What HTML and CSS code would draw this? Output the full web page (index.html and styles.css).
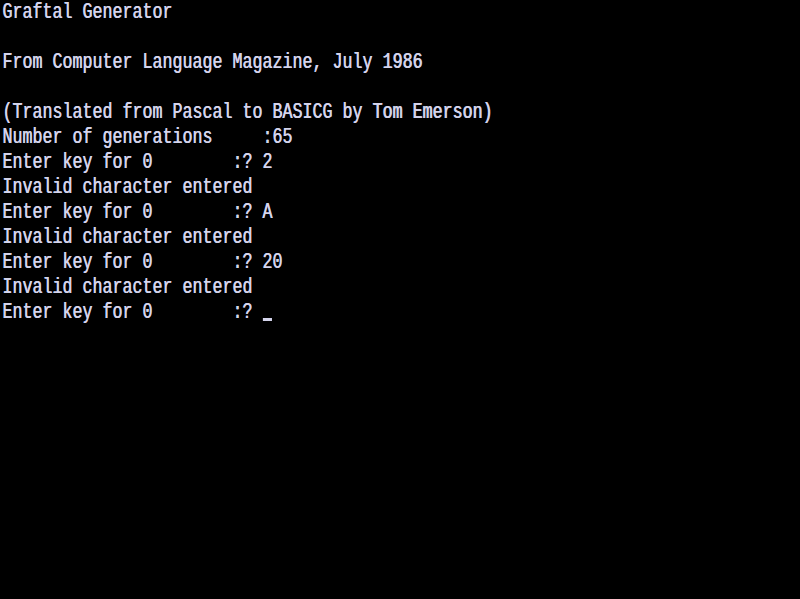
FILE: index.html
```html
<!DOCTYPE html>
<html>
<head>
<meta charset="utf-8">
<link rel="stylesheet" href="styles.css">
<title>Graftal Generator</title>
</head>
<body>
<pre class="screen">Graftal Generator

From Computer Language Magazine, July 1986

(Translated from Pascal to BASICG by Tom Emerson)
Number of generations     :65
Enter key for 0        :? 2
Invalid character entered
Enter key for 0        :? A
Invalid character entered
Enter key for 0        :? 20
Invalid character entered
Enter key for 0        :? <span class="cursor"></span></pre>
</body>
</html>
```
FILE: styles.css
```css
html, body {
  margin: 0;
  padding: 0;
  background: #000;
  width: 800px;
  height: 599px;
  overflow: hidden;
}
.screen {
  margin: 0;
  padding: 0 0 0 3px;
  color: #d4d4ec;
  font-family: "Liberation Mono", "DejaVu Sans Mono", monospace;
  font-size: 22px;
  line-height: 25px;
  text-shadow: 0.7px 0 0 #d4d4ec;
  transform: scaleX(0.7576);
  transform-origin: 0 0;
  white-space: pre;
}
.cursor {
  display: inline-block;
  width: 12px;
  height: 3px;
  margin-left: 1px;
  background: #d4d4ec;
  vertical-align: -3px;
}
```
